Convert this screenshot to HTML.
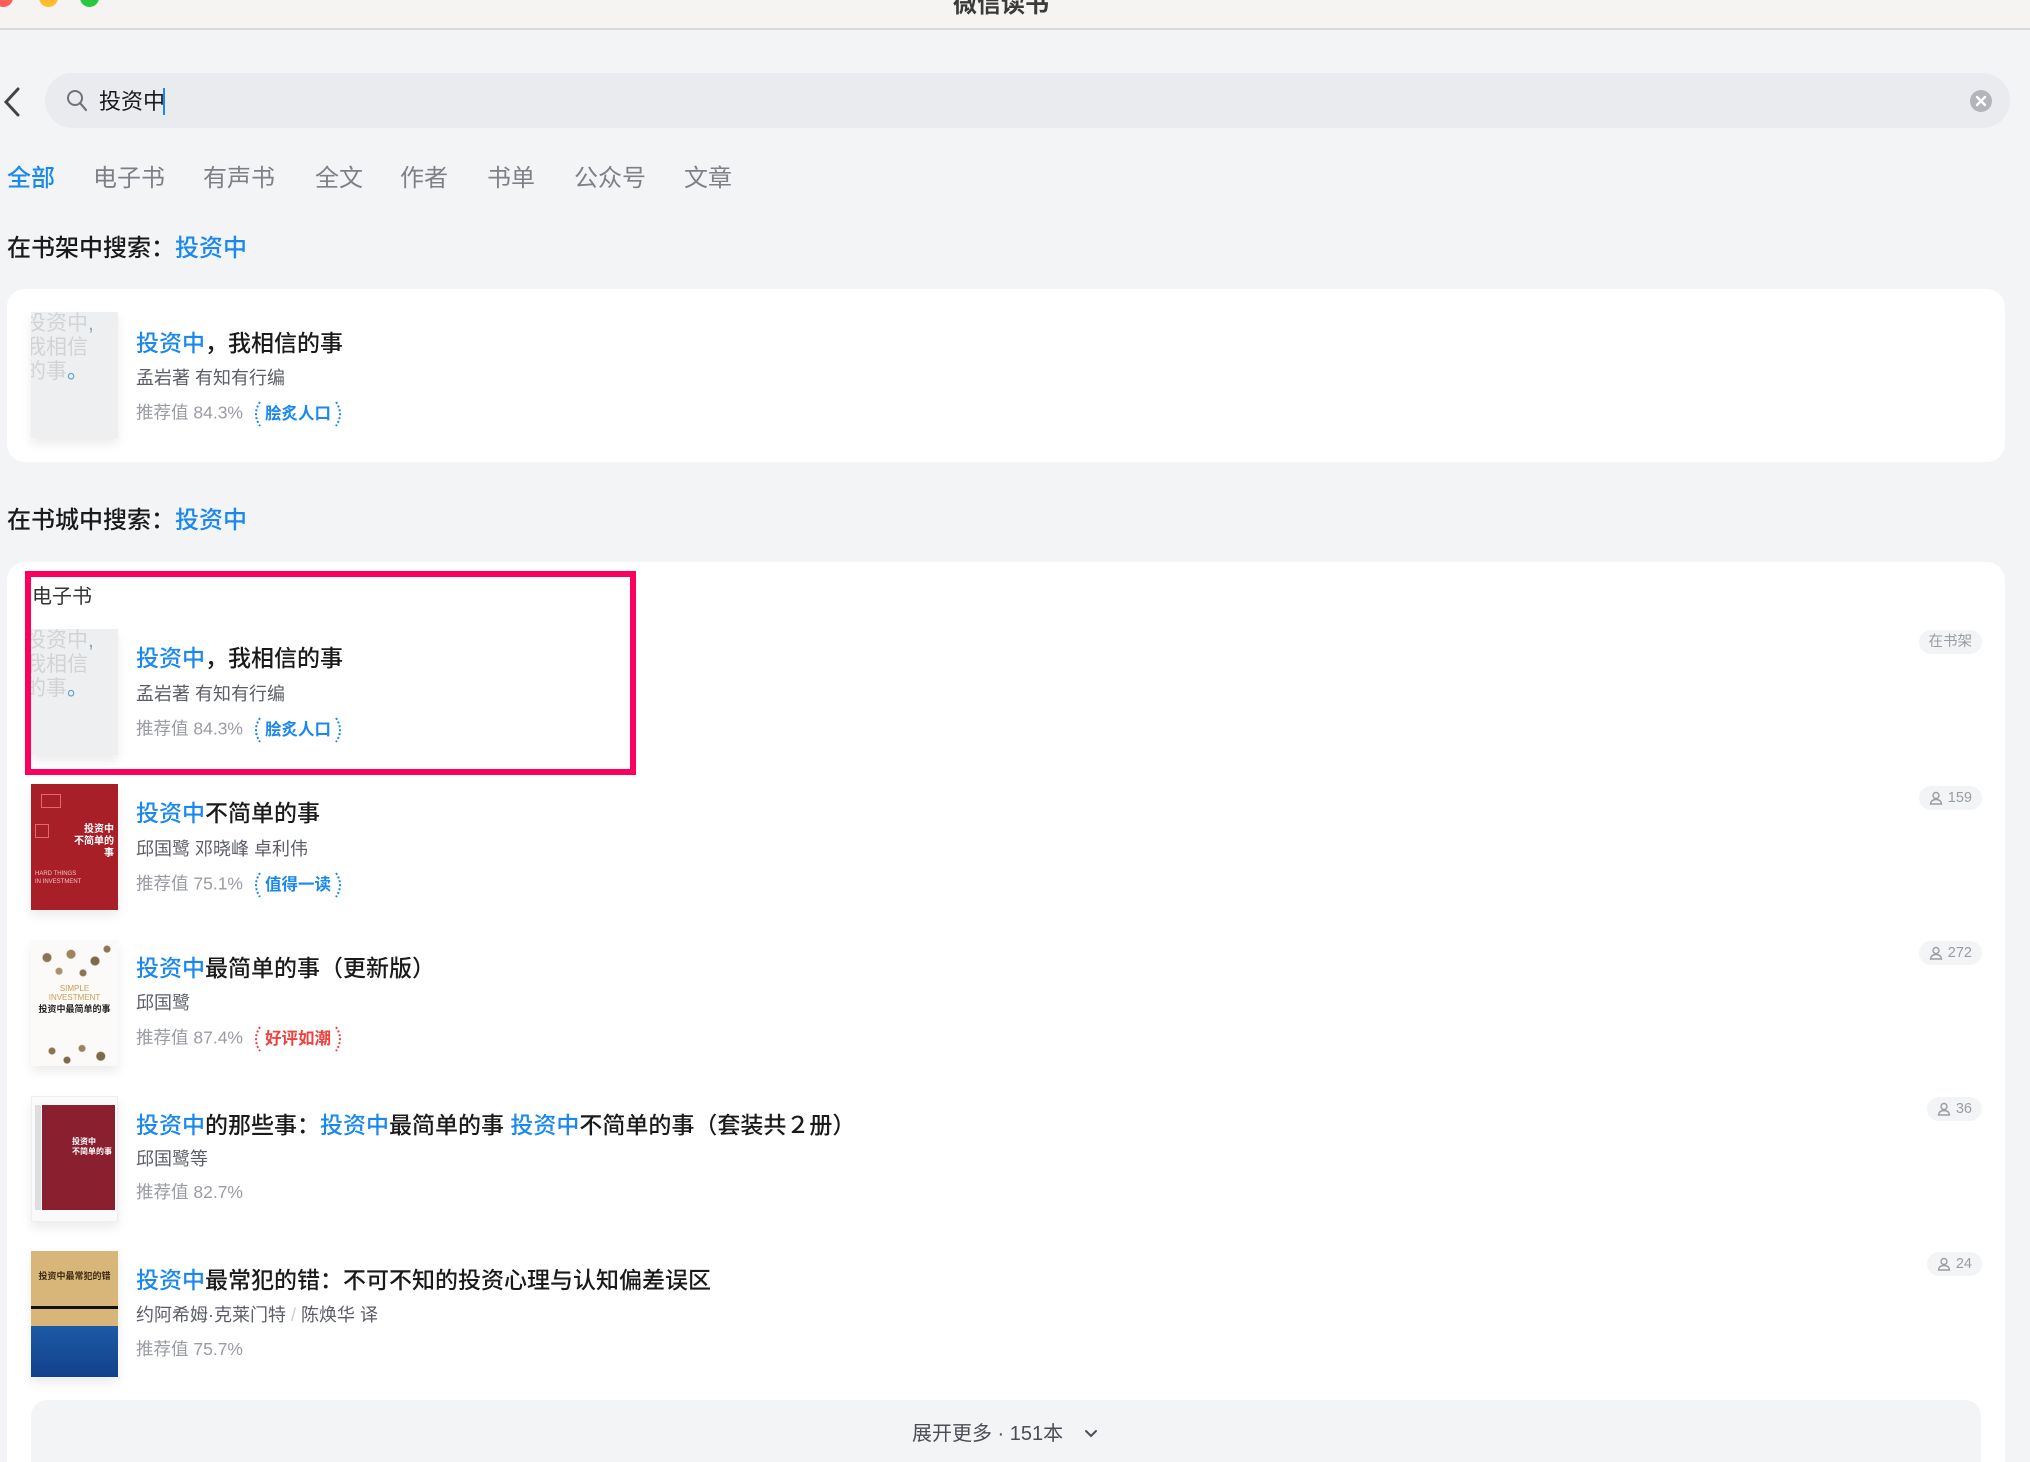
<!DOCTYPE html>
<html><head><meta charset="utf-8">
<style>
*{margin:0;padding:0;box-sizing:border-box}
html,body{width:2030px;height:1462px;overflow:hidden}
body{background:#f3f4f6;font-family:"Liberation Sans","Noto Sans CJK SC",sans-serif;position:relative}
.a{position:absolute;white-space:nowrap}
.blue{color:#1b88ee}
.title{font-size:23px;font-weight:500;color:#1a1a1a;line-height:30px}
.auth{font-size:18px;color:#5b5e66;line-height:24px}
.rec{font-size:17.5px;color:#9a9ca3;line-height:24px}
.badge{display:inline-flex;align-items:center;font-size:16.5px;font-weight:700;vertical-align:middle;margin-left:6px}
.badge svg{display:block;margin:0 2px}
.pill{position:absolute;right:48px;height:24px;border-radius:12px;background:#f3f4f6;color:#9a9ca3;font-size:14.5px;line-height:24px;padding:0 10px;display:flex;align-items:center;gap:5px}
.cover{position:absolute;left:31px;width:87px;height:126px;box-shadow:0 6px 10px rgba(0,0,0,.08);overflow:hidden}
</style></head><body>
<div class="a" style="left:0;top:0;width:2030px;height:30px;background:#f5f4f2;border-bottom:2px solid #d9d9db"></div>
<div class="a" style="left:-6px;top:-12px;width:19px;height:19px;border-radius:50%;background:#fe5f57"></div>
<div class="a" style="left:39px;top:-12px;width:19px;height:19px;border-radius:50%;background:#febc2e"></div>
<div class="a" style="left:80px;top:-12px;width:19px;height:19px;border-radius:50%;background:#28c840"></div>
<div class="a" style="left:953px;top:-16px;font-size:24px;font-weight:700;color:#3a3a3a">微信读书</div>
<svg class="a" style="left:3px;top:87px" width="18" height="30" viewBox="0 0 18 30"><path d="M15 2 L3 15 L15 28" fill="none" stroke="#444" stroke-width="3" stroke-linecap="round"/></svg>
<div class="a" style="left:45px;top:73px;width:1965px;height:55px;border-radius:28px;background:#eaebef"></div>
<svg class="a" style="left:66px;top:89px" width="22" height="24" viewBox="0 0 22 24"><circle cx="9" cy="9" r="7" fill="none" stroke="#70737a" stroke-width="2"/><path d="M14 14 L20 21" stroke="#70737a" stroke-width="2.2" stroke-linecap="round"/></svg>
<div class="a" style="left:99px;top:88px;font-size:22px;color:#1a1a1a;line-height:28px">投资中</div>
<div class="a" style="left:163px;top:88px;width:2px;height:27px;background:#1b88ee"></div>
<svg class="a" style="left:1970px;top:90px" width="22" height="22" viewBox="0 0 22 22"><circle cx="11" cy="11" r="11" fill="#b4b5ba"/><path d="M7 7 L15 15 M15 7 L7 15" stroke="#fff" stroke-width="2.4" stroke-linecap="round"/></svg>
<div class="a" style="left:7px;top:163px;font-size:24px;line-height:32px;color:#1b88ee;font-weight:500">全部</div>
<div class="a" style="left:93px;top:163px;font-size:24px;line-height:32px;color:#7e8087">电子书</div>
<div class="a" style="left:203px;top:163px;font-size:24px;line-height:32px;color:#7e8087">有声书</div>
<div class="a" style="left:315px;top:163px;font-size:24px;line-height:32px;color:#7e8087">全文</div>
<div class="a" style="left:400px;top:163px;font-size:24px;line-height:32px;color:#7e8087">作者</div>
<div class="a" style="left:487px;top:163px;font-size:24px;line-height:32px;color:#7e8087">书单</div>
<div class="a" style="left:574px;top:163px;font-size:24px;line-height:32px;color:#7e8087">公众号</div>
<div class="a" style="left:684px;top:163px;font-size:24px;line-height:32px;color:#7e8087">文章</div>
<div class="a" style="left:7px;top:233px;font-size:24px;line-height:32px;color:#1a1a1a;font-weight:500">在书架中搜索：<span class="blue">投资中</span></div>
<div class="a" style="left:7px;top:289px;width:1998px;height:173px;border-radius:18px;background:#fff"></div>

<div class="cover" style="top:312px;background:#eeeff0"><div style="font-size:21px;line-height:24px;color:#d2d3d5;margin-left:-6px">投资中<span style="color:#8ab">,</span><br>我相信<br>的事<span style="color:#5aa0d8">。</span></div></div>
<div class="a title" style="left:136px;top:328px"><span class="blue">投资中</span>，我相信的事</div>
<div class="a auth" style="left:136px;top:366px">孟岩著 有知有行编</div>
<div class="a rec" style="left:136px;top:400px">推荐值 84.3%<span class="badge blue"><svg width="12" height="28" viewBox="0 0 12 28"><path d="M9 2 Q1 14 9 26" fill="none" stroke="#1b88ee" stroke-width="2" stroke-dasharray="2 2"/></svg>脍炙人口<svg width="12" height="28" viewBox="0 0 12 28"><path d="M3 2 Q11 14 3 26" fill="none" stroke="#1b88ee" stroke-width="2" stroke-dasharray="2 2"/></svg></span></div>

<div class="a" style="left:7px;top:505px;font-size:24px;line-height:32px;color:#1a1a1a;font-weight:500">在书城中搜索：<span class="blue">投资中</span></div>
<div class="a" style="left:7px;top:562px;width:1998px;height:920px;border-radius:18px;background:#fff"></div>
<div class="a" style="left:32px;top:584px;font-size:20px;line-height:26px;color:#333">电子书</div>

<div class="cover" style="top:629px;background:#eeeff0"><div style="font-size:21px;line-height:24px;color:#d2d3d5;margin-left:-6px">投资中<span style="color:#8ab">,</span><br>我相信<br>的事<span style="color:#5aa0d8">。</span></div></div>
<div class="a title" style="left:136px;top:643px"><span class="blue">投资中</span>，我相信的事</div>
<div class="a auth" style="left:136px;top:682px">孟岩著 有知有行编</div>
<div class="a rec" style="left:136px;top:716px">推荐值 84.3%<span class="badge blue"><svg width="12" height="28" viewBox="0 0 12 28"><path d="M9 2 Q1 14 9 26" fill="none" stroke="#1b88ee" stroke-width="2" stroke-dasharray="2 2"/></svg>脍炙人口<svg width="12" height="28" viewBox="0 0 12 28"><path d="M3 2 Q11 14 3 26" fill="none" stroke="#1b88ee" stroke-width="2" stroke-dasharray="2 2"/></svg></span></div>
<div class="pill" style="top:630px">在书架</div>
<div class="a" style="left:25px;top:571px;width:611px;height:204px;border:6px solid #fc0060"></div>

<div class="cover" style="top:784px;background:#a81f28">
<div style="position:absolute;left:40px;top:40px;color:#fff;font-size:10px;line-height:12px;font-weight:700;text-align:right;right:4px">投资中<br>不简单的事</div>
<div style="position:absolute;left:10px;top:10px;width:20px;height:14px;border:1px solid #e06a6a"></div>
<div style="position:absolute;left:4px;top:40px;width:14px;height:14px;border:1px solid #e06a6a"></div>
<div style="position:absolute;left:4px;top:86px;color:#f0c0c0;font-size:6px;line-height:8px">HARD THINGS<br>IN INVESTMENT</div>
</div>
<div class="a title" style="left:136px;top:798px"><span class="blue">投资中</span>不简单的事</div>
<div class="a auth" style="left:136px;top:837px">邱国鹭 邓晓峰 卓利伟</div>
<div class="a rec" style="left:136px;top:871px">推荐值 75.1%<span class="badge blue"><svg width="12" height="28" viewBox="0 0 12 28"><path d="M9 2 Q1 14 9 26" fill="none" stroke="#1b88ee" stroke-width="2" stroke-dasharray="2 2"/></svg>值得一读<svg width="12" height="28" viewBox="0 0 12 28"><path d="M3 2 Q11 14 3 26" fill="none" stroke="#1b88ee" stroke-width="2" stroke-dasharray="2 2"/></svg></span></div>
<div class="pill" style="top:786px"><svg width="14" height="14" viewBox="0 0 14 14"><circle cx="7" cy="4.5" r="3" fill="none" stroke="#9a9ca3" stroke-width="1.4"/><path d="M1.5 13 Q2 8.5 7 8.5 Q12 8.5 12.5 13 Z" fill="none" stroke="#9a9ca3" stroke-width="1.4"/></svg>159</div>

<div class="cover" style="top:940px;background:#fbfaf8">
<div style="position:absolute;left:4px;top:4px;width:80px;height:34px;background:radial-gradient(circle at 15% 40%,#8a7655 4px,transparent 5px),radial-gradient(circle at 45% 30%,#9c8460 4px,transparent 5px),radial-gradient(circle at 75% 50%,#7d6a4c 4px,transparent 5px),radial-gradient(circle at 30% 80%,#a89070 3px,transparent 4px),radial-gradient(circle at 90% 15%,#8a7655 3px,transparent 4px),radial-gradient(circle at 60% 85%,#8a7655 3px,transparent 4px)"></div>
<div style="position:absolute;left:0;right:0;top:44px;text-align:center;color:#c9a050;font-size:8px;line-height:9px">SIMPLE<br>INVESTMENT</div>
<div style="position:absolute;left:0;right:0;top:62px;text-align:center;color:#222;font-size:9px;font-weight:700">投资中最简单的事</div>
<div style="position:absolute;left:6px;top:98px;width:75px;height:26px;background:radial-gradient(circle at 20% 50%,#8a7655 3px,transparent 4px),radial-gradient(circle at 60% 40%,#9c8460 3px,transparent 4px),radial-gradient(circle at 85% 70%,#7d6a4c 4px,transparent 5px),radial-gradient(circle at 40% 85%,#7d6a4c 3px,transparent 4px)"></div>
</div>
<div class="a title" style="left:136px;top:953px"><span class="blue">投资中</span>最简单的事（更新版）</div>
<div class="a auth" style="left:136px;top:991px">邱国鹭</div>
<div class="a rec" style="left:136px;top:1025px">推荐值 87.4%<span class="badge" style="color:#f2413d"><svg width="12" height="28" viewBox="0 0 12 28"><path d="M9 2 Q1 14 9 26" fill="none" stroke="#f2413d" stroke-width="2" stroke-dasharray="2 2"/></svg>好评如潮<svg width="12" height="28" viewBox="0 0 12 28"><path d="M3 2 Q11 14 3 26" fill="none" stroke="#f2413d" stroke-width="2" stroke-dasharray="2 2"/></svg></span></div>
<div class="pill" style="top:941px"><svg width="14" height="14" viewBox="0 0 14 14"><circle cx="7" cy="4.5" r="3" fill="none" stroke="#9a9ca3" stroke-width="1.4"/><path d="M1.5 13 Q2 8.5 7 8.5 Q12 8.5 12.5 13 Z" fill="none" stroke="#9a9ca3" stroke-width="1.4"/></svg>272</div>

<div class="cover" style="top:1096px;background:#fafafa;border:1px solid #eee">
<div style="position:absolute;left:3px;top:8px;width:6px;height:105px;background:#ddd"></div>
<div style="position:absolute;left:10px;top:8px;width:73px;height:105px;background:#8a1f30"></div>
<div style="position:absolute;left:40px;top:40px;color:#fff;font-size:8px;font-weight:700;line-height:10px">投资中<br>不简单的事</div>
</div>
<div class="a title" style="left:136px;top:1110px"><span class="blue">投资中</span>的那些事：<span class="blue">投资中</span>最简单的事 <span class="blue">投资中</span>不简单的事（套装共２册）</div>
<div class="a auth" style="left:136px;top:1147px">邱国鹭等</div>
<div class="a rec" style="left:136px;top:1180px">推荐值 82.7%</div>
<div class="pill" style="top:1097px"><svg width="14" height="14" viewBox="0 0 14 14"><circle cx="7" cy="4.5" r="3" fill="none" stroke="#9a9ca3" stroke-width="1.4"/><path d="M1.5 13 Q2 8.5 7 8.5 Q12 8.5 12.5 13 Z" fill="none" stroke="#9a9ca3" stroke-width="1.4"/></svg>36</div>

<div class="cover" style="top:1251px;background:linear-gradient(#d8b579 0,#d8b579 55px,#111 55px,#111 58px,#d8b579 58px,#d8b579 75px,#1d5aa8 75px,#12418a 126px)">
<div style="position:absolute;left:0;right:0;top:18px;text-align:center;color:#3a2a10;font-size:9px;font-weight:700">投资中最常犯的错</div>
</div>
<div class="a title" style="left:136px;top:1265px"><span class="blue">投资中</span>最常犯的错：不可不知的投资心理与认知偏差误区</div>
<div class="a auth" style="left:136px;top:1303px">约阿希姆·克莱门特 <span style="color:#ccc">/</span> 陈焕华 译</div>
<div class="a rec" style="left:136px;top:1337px">推荐值 75.7%</div>
<div class="pill" style="top:1252px"><svg width="14" height="14" viewBox="0 0 14 14"><circle cx="7" cy="4.5" r="3" fill="none" stroke="#9a9ca3" stroke-width="1.4"/><path d="M1.5 13 Q2 8.5 7 8.5 Q12 8.5 12.5 13 Z" fill="none" stroke="#9a9ca3" stroke-width="1.4"/></svg>24</div>

<div class="a" style="left:31px;top:1400px;width:1950px;height:62px;border-radius:16px 16px 0 0;background:#f3f4f6"></div>
<div class="a" style="left:912px;top:1421px;font-size:20px;line-height:26px;color:#4a4d55">展开更多 · 151本</div>
<svg class="a" style="left:1084px;top:1429px" width="14" height="10" viewBox="0 0 14 10"><path d="M2 2 L7 7 L12 2" fill="none" stroke="#4a4d55" stroke-width="2" stroke-linecap="round"/></svg>
</body></html>
